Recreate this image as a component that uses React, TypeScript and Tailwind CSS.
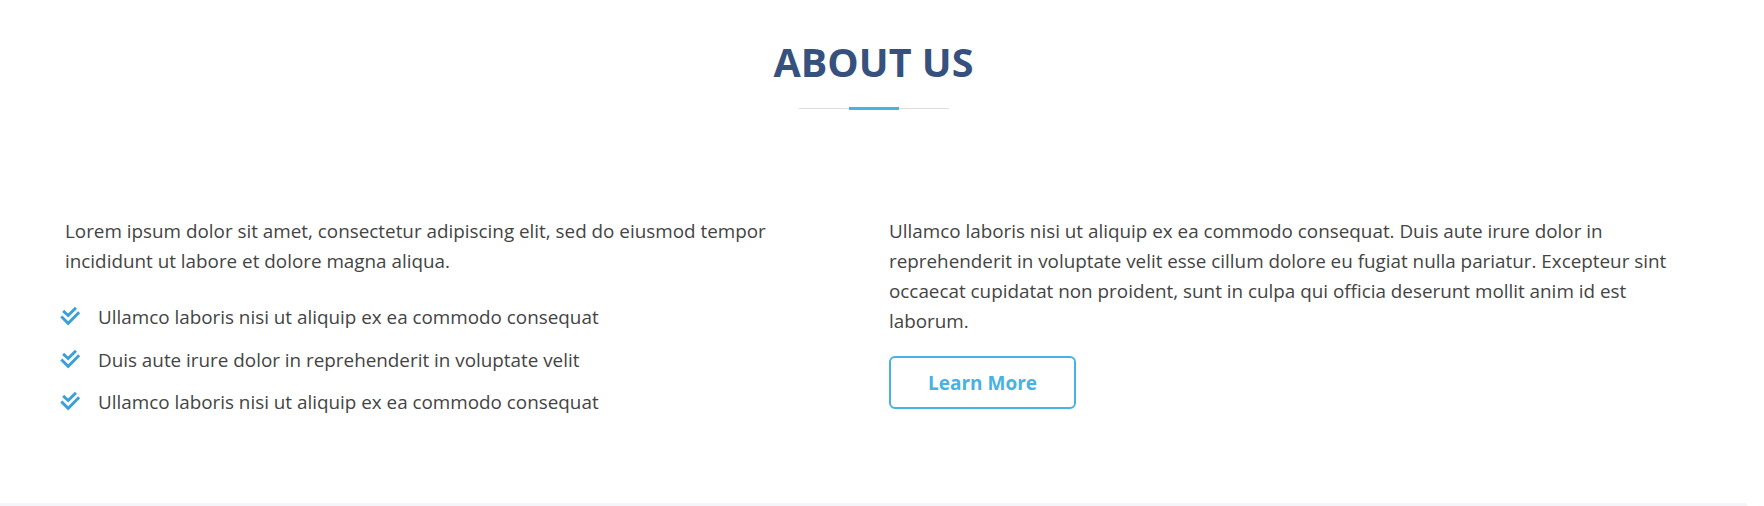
const items = [
  'Ullamco laboris nisi ut aliquip ex ea commodo consequat',
  'Duis aute irure dolor in reprehenderit in voluptate velit',
  'Ullamco laboris nisi ut aliquip ex ea commodo consequat',
]

function CheckDouble() {
  return (
    <svg viewBox="0 0 24 24" className="w-[22px] h-[22px] shrink-0" fill="none" stroke="#3ba0d8" strokeWidth="3.2">
      <path d="M4.5 6.5l5.5 5 8.5-8.5" />
      <path d="M2.5 12.5l7.5 7.5 12-12" />
    </svg>
  )
}

export default function App() {
  return (
    <div className="w-full h-[506px] bg-white flex flex-col pr-[17px] font-['Open_Sans',sans-serif]">
      <section className="h-[503px]">
        <div className="flex flex-col items-center pt-[42px]">
          <h2 className="text-[39.5px] leading-[40px] font-bold text-[#37517e]">ABOUT US</h2>
          <div className="relative w-[150px] h-[3px] mt-[25px]">
            <div className="absolute left-0 right-0 bottom-[1px] h-px bg-[#dddddd]" />
            <div className="absolute left-[50px] w-[50px] h-[3px] bg-[#47b2e4]" />
          </div>
        </div>

        <div className="grid grid-cols-[775px_795px] gap-x-[49px] pl-[65px] mt-[106px] text-[18.85px] leading-[30px] text-[#444444]">
          <div>
            <p className="mb-[26px]">
              Lorem ipsum dolor sit amet, consectetur adipiscing elit, sed do eiusmod tempor incididunt ut labore et dolore
              magna aliqua.
            </p>
            <ul className="flex flex-col gap-[12.6px] -ml-[6px]">
              {items.map((t, i) => (
                <li key={i} className="flex items-start gap-[17px]">
                  <span className="pt-[3px]">
                    <CheckDouble />
                  </span>
                  <span>{t}</span>
                </li>
              ))}
            </ul>
          </div>
          <div>
            <p className="mb-[20px]">
              Ullamco laboris nisi ut aliquip ex ea commodo consequat. Duis aute irure dolor in reprehenderit in voluptate
              velit esse cillum dolore eu fugiat nulla pariatur. Excepteur sint occaecat cupidatat non proident, sunt in
              culpa qui officia deserunt mollit anim id est laborum.
            </p>
            <a
              href="#"
              className="flex items-center justify-center w-[187px] h-[53px] border-2 border-[#47b2e4] rounded-[6px] text-[#47b2e4] font-bold text-[19px]"
            >
              Learn More
            </a>
          </div>
        </div>
      </section>
      <div className="h-[3px] bg-[#f3f5fa]" />
    </div>
  )
}
